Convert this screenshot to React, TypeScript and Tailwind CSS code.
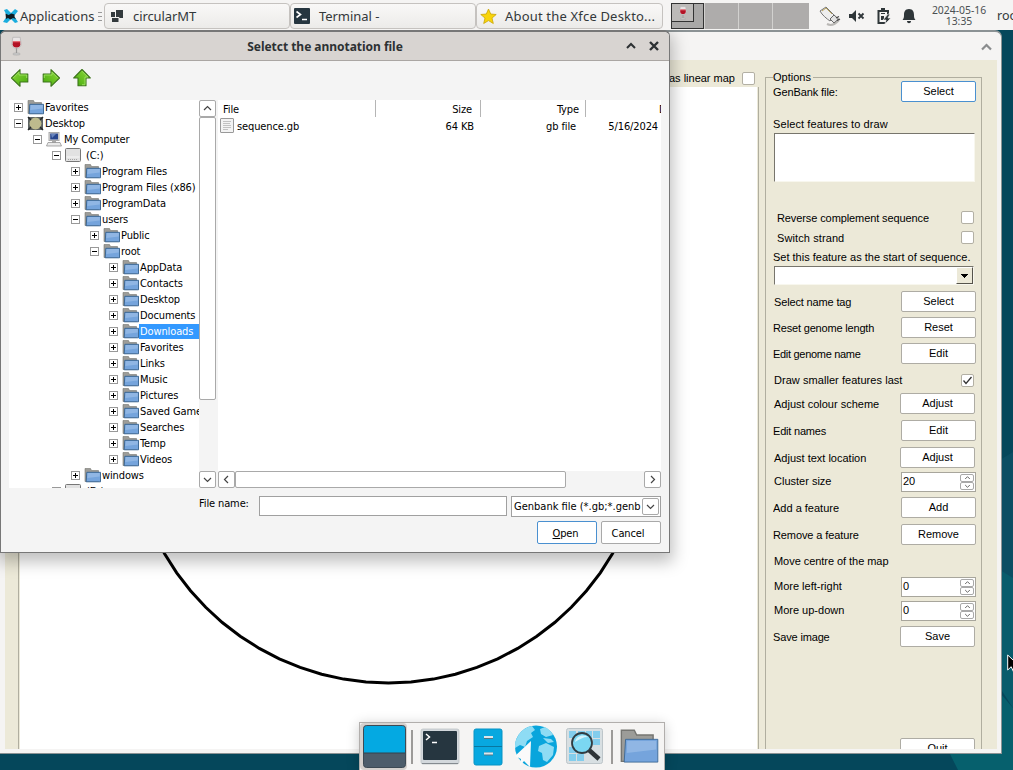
import React from "react";

const tahoma = "font-['DejaVu_Sans_Condensed','DejaVu_Sans',sans-serif] [font-stretch:condensed] text-[11px] tracking-[-0.12px]";

function Folder({ big = false }: { big?: boolean }) {
  return (
    <svg className={big ? "h-[36px] w-[40px] shrink-0" : "h-[15px] w-[17px] shrink-0"} viewBox="0 0 17 15" preserveAspectRatio="none">
      <path d="M1 .5h5.500l1 2h7v11H1z" fill="#9c9c98" stroke="#757571" strokeWidth=".6" />
      <path d="M2.800 4.300h13.700v9.500H2.200z" fill="#75a4dc" stroke="#34618f" strokeWidth={big ? ".35" : ".9"} />
      <path d="M3.500 5h12.300v3.500L3.300 10z" fill="#a2c3ea" opacity=".6" />
    </svg>
  );
}

function Drive() {
  return (
    <svg className="h-[15px] w-[16px] shrink-0" viewBox="0 0 16 15">
      <rect x=".5" y=".5" width="15" height="13" rx="1" fill="#e2e2e2" stroke="#777" />
      <path d="M1.5 9h13" stroke="#f8f8f8" />
      <path d="M3 11.5h10" stroke="#a5a5a5" strokeDasharray="1 1" />
    </svg>
  );
}

function DesktopIcon() {
  return (
    <svg className="h-[15px] w-[17px] shrink-0" viewBox="0 0 17 15">
      <rect x="1" y="1" width="15" height="13" rx="1" fill="#5d6362" />
      <circle cx="8.500" cy="7.500" r="6" fill="#bdbb8d" />
      <path d="M1 1l3 3M16 1l-3 3M1 14l3-3M16 14l-3-3" stroke="#25292b" strokeWidth="1.500" />
    </svg>
  );
}

function ComputerIcon() {
  return (
    <svg className="h-[15px] w-[16px] shrink-0" viewBox="0 0 16 15">
      <rect x="3" y=".5" width="10" height="8" fill="#ddd" stroke="#aaa" />
      <rect x="4.2" y="1.5" width="7.8" height="6" fill="#27458d" />
      <path d="M5 2h5L6 6z" fill="#6683bd" />
      <path d="M6 9h4v2H6z" fill="#aaa" />
      <path d="M2 10.5h12l1.5 3.5H.5z" fill="#e9e9e9" stroke="#888" strokeWidth=".7" />
    </svg>
  );
}

function Wine({ className = "h-[21px] w-[12px]" }: { className?: string }) {
  return (
    <svg className={className} viewBox="0 0 12 21">
      <path d="M2 1h8l1 7c0 3-2 5-5 5s-5-2-5-5z" fill="#e9e5e5" stroke="#b5b1b1" strokeWidth=".8" />
      <path d="M2 5.500h8l.2 3C10 11 8.500 12 6 12s-4-1-4.200-3.500z" fill="#b31225" />
      <path d="M2 5h8v1.500H2z" fill="#e56b74" />
      <path d="M6 13v6" stroke="#999" strokeWidth="1.300" />
      <ellipse cx="6" cy="19.200" rx="4" ry="1.200" fill="#ccc" stroke="#999" strokeWidth=".5" />
    </svg>
  );
}

function Arrow({ turn }: { turn: string }) {
  return (
    <svg className={"h-[20px] w-[20px] " + turn} viewBox="0 0 20 20">
      <defs>
        <linearGradient id="leaf" x1="0" y1="0" x2="1" y2="1">
          <stop offset="0" stopColor="#8fdb3c" />
          <stop offset="1" stopColor="#45a80c" />
        </linearGradient>
      </defs>
      <path d="M1.500 10L10 1.700V6h7.800v8H10v4.300z" fill="url(#leaf)" stroke="#3c741b" strokeWidth="1.100" strokeLinejoin="round" />
      <path d="M3.200 10L9 4.200V7h7.700v3" fill="none" stroke="#a4e66a" strokeWidth=".8" />
    </svg>
  );
}

function Chevron({ turn = "", className = "h-[9px] w-[9px]" }: { turn?: string; className?: string }) {
  return (
    <svg className={className + " " + turn} viewBox="0 0 9 9">
      <path d="M1 6l3.500-3.500L8 6" fill="none" stroke="#444" strokeWidth="1.200" />
    </svg>
  );
}

function ScrollBtn({ turn }: { turn: string }) {
  return (
    <div className="flex h-[17px] w-[17px] shrink-0 items-center justify-center rounded-[2px] border border-[#a9a9a9] bg-white">
      <Chevron turn={turn} />
    </div>
  );
}

type Node = { n: string; pad: string; open?: boolean; icon?: React.ReactNode; sel?: boolean; gap?: string };
const P0 = "pl-[5px]";
const P1 = "pl-[24px]";
const P2 = "pl-[43px]";
const P3 = "pl-[62px]";
const P4 = "pl-[81px]";
const P5 = "pl-[100px]";
const tree: Node[] = [
  { n: "Favorites", pad: P0 },
  { n: "Desktop", pad: P0, open: true, icon: <DesktopIcon /> },
  { n: "My Computer", pad: P1, open: true, icon: <ComputerIcon /> },
  { n: "(C:)", pad: P2, open: true, icon: <Drive />, gap: "ml-[3px]" },
  { n: "Program Files", pad: P3 },
  { n: "Program Files (x86)", pad: P3 },
  { n: "ProgramData", pad: P3 },
  { n: "users", pad: P3, open: true },
  { n: "Public", pad: P4 },
  { n: "root", pad: P4, open: true },
  ...["AppData", "Contacts", "Desktop", "Documents", "Downloads", "Favorites", "Links", "Music", "Pictures", "Saved Games", "Searches", "Temp", "Videos"].map(
    (n) => ({ n, pad: P5, sel: n === "Downloads" })
  ),
  { n: "windows", pad: P3 },
  { n: "(D:)", pad: P2, open: true, icon: <Drive />, gap: "ml-[3px]" },
];

function TreeRow({ node }: { node: Node }) {
  return (
    <div className={"flex h-[16px] shrink-0 items-start whitespace-nowrap " + node.pad}>
      <svg className="mr-[4px] mt-[3px] h-[9px] w-[9px] shrink-0" viewBox="0 0 9 9" shapeRendering="crispEdges">
        <rect x=".5" y=".5" width="8" height="8" fill="#fff" stroke="#999" />
        <path d={node.open ? "M2 4.500h5" : "M2 4.500h5M4.500 2v5"} stroke="#000" />
      </svg>
      <div className="flex w-[18px] shrink-0">{node.icon ?? <Folder />}</div>
      <span className={"h-[15px] leading-[16px] " + (node.gap ?? "") + (node.sel ? " -ml-px grow bg-[#3399ff] pl-px text-white" : "")}>
        {node.n}
      </span>
    </div>
  );
}

function Dialog() {
  return (
    <section className="absolute left-0 top-[30px] flex h-[523px] w-[670px] flex-col overflow-hidden rounded-t-[6px] border border-t-2 border-[#777] bg-[#f4f4f4] shadow-[0_6px_16px_3px_rgba(0,0,0,0.25)]">
      <header className="flex h-[29px] shrink-0 items-center border-b border-[#aaa6a3] bg-[#d8d4d1]">
        <div className="flex w-[30px] justify-center">
          <Wine className="h-[20px] w-[11px]" />
        </div>
        <h1 className="grow pr-[7px] pt-px text-center font-['Noto_Sans',sans-serif] text-[12px] font-bold tracking-[-0.03px] text-[#2d3133]">
          Seletct the annotation file
        </h1>
        <div className="flex w-[43px] items-center gap-[13px]">
          <svg className="h-[10px] w-[10px]" viewBox="0 0 10 10">
            <path d="M1 7l4-4 4 4" fill="none" stroke="#2d3133" strokeWidth="2" />
          </svg>
          <svg className="h-[10px] w-[10px]" viewBox="0 0 10 10">
            <path d="M1 1l8 8M9 1L1 9" stroke="#2d3133" strokeWidth="2.400" />
          </svg>
        </div>
      </header>
      <div className="flex h-[39px] shrink-0 items-center gap-[11px] pb-[6px] pl-[9px]">
        <Arrow turn="" />
        <Arrow turn="-scale-x-100" />
        <Arrow turn="rotate-90" />
      </div>
      <div className={"flex h-[388px] shrink-0 pl-[8px] text-black " + tahoma}>
        <div className="flex w-[190px] flex-col overflow-hidden bg-white">
          {tree.map((node, i) => (
            <TreeRow key={i} node={node} />
          ))}
        </div>
        <div className="flex w-[17px] flex-col">
          <ScrollBtn turn="" />
          <div className="h-[283px] rounded-[2px] border border-[#a9a9a9] bg-white" />
          <div className="grow" />
          <ScrollBtn turn="rotate-180" />
        </div>
        <div className="ml-[2px] flex w-[443px] flex-col">
          <div className="h-[371px] overflow-hidden bg-white">
            <div className="flex h-[17px] items-center">
              <div className="h-full w-[158px] border-r border-[#b5b5b5] pl-[5px] leading-[19px]">File</div>
              <div className="h-full w-[105px] border-r border-[#b5b5b5] pr-[8px] text-right leading-[19px]">Size</div>
              <div className="h-full w-[105px] border-r border-[#b5b5b5] pr-[6px] text-right leading-[19px]">Type</div>
              <div className="h-full grow overflow-hidden pl-[73px] leading-[19px]">
                <span className="inline-block w-[2px] overflow-hidden align-top">Date</span>
              </div>
            </div>
            <div className="flex h-[17px] items-center whitespace-nowrap leading-[19px]">
              <svg className="ml-[2px] mr-[3px] h-[15px] w-[14px]" viewBox="0 0 14 15">
                <rect x=".5" y=".5" width="13" height="14" rx=".5" fill="#f3f3f3" stroke="#999" />
                <path d="M3 3.500h8M3 5.500h7M3 7.500h8M3 9.500h8M3 11.500h5" stroke="#c2c2c2" />
              </svg>
              <div className="w-[140px] pt-px">sequence.gb</div>
              <div className="w-[97px] pt-px text-right">64 KB</div>
              <div className="w-[102px] pt-px text-right">gb file</div>
              <div className="w-[82px] pt-px text-right">5/16/2024</div>
            </div>
          </div>
          <div className="flex h-[17px]">
            <ScrollBtn turn="-rotate-90" />
            <div className="w-[331px] rounded-[2px] border border-[#a9a9a9] bg-white" />
            <div className="grow" />
            <ScrollBtn turn="rotate-90" />
          </div>
        </div>
      </div>
      <div className={"flex h-[30px] shrink-0 items-start pl-[198px] pt-[8px] text-black " + tahoma}>
        <span className="w-[60px] leading-[16px]">File name:</span>
        <div className="h-[20px] w-[248px] border border-[#a0a0a0] bg-white" />
        <div className="ml-[4px] flex h-[21px] w-[150px] items-center border border-[#a0a0a0] bg-white">
          <span className="w-[130px] overflow-hidden whitespace-nowrap pl-[2px] pt-[2px] tracking-[0px]">Genbank file (*.gb;*.genb</span>
          <div className="flex h-[17px] w-[17px] items-center justify-center rounded-[2px] border border-[#a9a9a9]">
            <Chevron turn="rotate-180" />
          </div>
        </div>
      </div>
      <div className={"flex gap-[4px] pl-[536px] pt-[3px] text-black " + tahoma}>
        <button className="h-[23px] w-[60px] rounded-[2px] border border-[#4a90d0] bg-white pr-[3px] pt-[3px]">
          <u>O</u>pen
        </button>
        <button className="h-[23px] w-[60px] rounded-[2px] border border-[#a9a9a9] bg-white pr-[6px] pt-[3px]">Cancel</button>
      </div>
    </section>
  );
}

function Btn({ children, active = false, shift = false }: { children: string; active?: boolean; shift?: boolean }) {
  return (
    <button
      className={
        "h-[21px] w-[75px] shrink-0 rounded-[2px] border bg-white leading-[19px] " +
        (active ? "border-[#4a90d0]" : "border-[#aeaca4]") +
        (shift ? " mr-px" : "")
      }
    >
      {children}
    </button>
  );
}

function Check({ on = false }: { on?: boolean }) {
  return (
    <span className="mr-[2px] flex h-[13px] w-[13px] shrink-0 items-center justify-center rounded-[2px] border border-[#b3b0a4] bg-white">
      {on && (
        <svg className="h-[9px] w-[9px]" viewBox="0 0 9 9">
          <path d="M.5 4.500L3 7.500 8.500 1" fill="none" stroke="#333" strokeWidth="1.300" />
        </svg>
      )}
    </span>
  );
}

function Spin({ value }: { value: string }) {
  return (
    <div className="flex h-[20px] w-[75px] shrink-0 border border-[#a8a69c] bg-white">
      <span className="grow pl-[1px] leading-[16px]">{value}</span>
      <div className="mr-px mt-px flex flex-col">
        <div className="flex h-[8px] w-[14px] items-center justify-center rounded-[2px] border border-[#a9a9a9]">
          <Chevron className="h-[6px] w-[7px]" />
        </div>
        <div className="flex h-[8px] w-[14px] items-center justify-center rounded-[2px] border border-[#a9a9a9]">
          <Chevron className="h-[6px] w-[7px]" turn="rotate-180" />
        </div>
      </div>
    </div>
  );
}

function Row({ label, h, pad = "", top = "pt-[4px]", children }: { label: string; h: string; pad?: string; top?: string; children?: React.ReactNode }) {
  return (
    <div className={"flex shrink-0 items-start justify-between whitespace-nowrap " + h}>
      <span className={"leading-[14px] " + top + " " + pad}>{label}</span>
      {children}
    </div>
  );
}

function Options() {
  return (
    <fieldset className="mt-[12px] flex h-[690px] w-[217px] flex-col border border-b-0 border-[#b0ae9f] px-[7px] font-['Liberation_Sans',sans-serif] text-[11px] text-black">
      <div className="-mt-[9px] h-[12px] shrink-0">
        <span className="bg-[#ece9d8] pr-[2px] leading-[10px]">Options</span>
      </div>
      <div className="-mr-[2px] flex grow flex-col overflow-hidden">
        <Row label="GenBank file:" h="h-[36px]" pad="tracking-[-0.1px]">
          <Btn active>Select</Btn>
        </Row>
        <span className="h-[16px] shrink-0 leading-[14px] tracking-[0.1px]">Select features to draw</span>
        <div className="ml-px h-[49px] w-[201px] shrink-0 border border-b-[#f8f7ee] border-l-[#77756c] border-r-[#f8f7ee] border-t-[#77756c] bg-white" />
        <Row label="Reverse complement sequence" h="mt-[25px] h-[20px] [&>span:last-child]:mt-[4px]" pad="pl-[4px] tracking-[-0.1px]">
          <Check />
        </Row>
        <Row label="Switch strand" h="h-[20px] [&>span:last-child]:mt-[4px]" pad="pl-[4px] tracking-[0.1px]">
          <Check />
        </Row>
        <span className="h-[19px] shrink-0 whitespace-nowrap pt-[3px] leading-[14px]">Set this feature as the start of sequence.</span>
        <div className="ml-px flex h-[19px] w-[200px] shrink-0 justify-end border border-b-[#f8f7ee] border-l-[#77756c] border-r-[#f8f7ee] border-t-[#77756c] bg-white">
          <div className="flex w-[17px] items-center justify-center border border-b-[#55534b] border-l-white border-r-[#55534b] border-t-white bg-[#ece9d8]">
            <svg className="h-[4px] w-[7px]" viewBox="0 0 7 4" shapeRendering="crispEdges">
              <path d="M0 0h7L3.500 4z" />
            </svg>
          </div>
        </div>
        <Row label="Select name tag" h="mt-[6px] h-[26px]" pad="pl-[1px] tracking-[-0.15px]"><Btn>Select</Btn></Row>
        <Row label="Reset genome length" h="h-[26px]" pad="tracking-[-0.18px]"><Btn>Reset</Btn></Row>
        <Row label="Edit genome name" h="h-[27px]" pad="tracking-[-0.3px]"><Btn>Edit</Btn></Row>
        <Row label="Draw smaller features last" h="h-[23px] [&>span:last-child]:mt-[4px]" pad="pl-[1px] tracking-[0.05px]" top="pt-[3px]"><Check on /></Row>
        <Row label="Adjust colour scheme" h="h-[27px]" pad="pl-[1px]"><Btn shift>Adjust</Btn></Row>
        <Row label="Edit names" h="h-[27px]" pad="tracking-[-0.2px]"><Btn>Edit</Btn></Row>
        <Row label="Adjust text location" h="h-[25px]" pad="pl-[1px]"><Btn shift>Adjust</Btn></Row>
        <Row label="Cluster size" h="h-[25px]" pad="pl-[1px]" top="pt-[2px]"><Spin value="20" /></Row>
        <Row label="Add a feature" h="h-[27px]"><Btn>Add</Btn></Row>
        <Row label="Remove a feature" h="h-[27px]" pad="tracking-[-0.1px]"><Btn>Remove</Btn></Row>
        <Row label="Move centre of the map" h="h-[26px]" pad="pl-[1px] tracking-[-0.05px]" top="pt-[3px]" />
        <Row label="More left-right" h="h-[24px]" pad="pl-[1px]" top="pt-[2px]"><Spin value="0" /></Row>
        <Row label="More up-down" h="h-[25px]" pad="pl-[1px]" top="pt-[2px]"><Spin value="0" /></Row>
        <Row label="Save image" h="h-[112px]" pad="tracking-[-0.15px]"><Btn shift>Save</Btn></Row>
        <div className="flex shrink-0 justify-end"><Btn shift>Quit</Btn></div>
      </div>
    </fieldset>
  );
}

const ring = Array.from({ length: 72 }, (_, i) => {
  const a = (i * 2 * Math.PI) / 72 + Math.PI / 2;
  return `${(368.5 + 258.5 * Math.cos(a)).toFixed(1)},${(337.5 + 258.5 * Math.sin(a)).toFixed(1)}`;
}).join(" ");

function MainWindow() {
  return (
    <section className="absolute left-0 top-[30px] flex h-[724px] w-[1002px] flex-col overflow-hidden rounded-t-[7px] border-b border-r border-t-2 border-[#8b9294] bg-[#f5f4f3]">
      <header className="flex h-[28px] shrink-0 items-center justify-end pr-[9px]">
        <svg className="mt-[2px] h-[10px] w-[11px]" viewBox="0 0 11 10">
          <path d="M1 7.500L5.500 3 10 7.500" fill="none" stroke="#8a8c8d" strokeWidth="2.200" />
        </svg>
      </header>
      <div className="ml-[5px] mr-[4px] flex h-[689px] shrink-0 overflow-hidden bg-[#ece9d8]">
        <div className="ml-[13px] flex w-[741px] flex-col">
          <div className="flex h-[27px] items-center justify-end pr-[4px] pt-[9px] font-['Liberation_Sans',sans-serif] text-[11px] text-black">
            <span className="mr-[7px]">as linear map</span>
            <span className="h-[13px] w-[13px] rounded-[2px] border border-[#b3b0a4] bg-white" />
          </div>
          <div className="grow border-x border-[#b0ae9f] px-px">
            <svg className="h-full w-[737px] bg-white" viewBox="0 0 737 662">
              <polygon points={ring} fill="none" stroke="#000" strokeWidth="3" />
            </svg>
          </div>
        </div>
        <div className="ml-[6px] mt-[5px]">
          <Options />
        </div>
      </div>
    </section>
  );
}

function Task({ icon, children, w, track = "" }: { icon: React.ReactNode; children: string; w: string; track?: string }) {
  return (
    <div className={"flex h-[26px] shrink-0 items-center rounded-[4px] border border-[#c5c2bf] bg-gradient-to-b from-[#f9f8f7] to-[#ecebe9] pl-[3px] " + w}>
      <div className="flex w-[25px] shrink-0">{icon}</div>
      <span className={"whitespace-nowrap pt-px " + track}>{children}</span>
    </div>
  );
}

function TopPanel() {
  return (
    <nav className="absolute left-0 top-0 flex h-[30px] w-[1013px] items-center overflow-hidden bg-[#f5f4f3] pt-[2px] font-['Noto_Sans',sans-serif] text-[13px] text-[#33383a]">
      <svg className="ml-[3px] h-[16px] w-[15px] shrink-0" viewBox="0 0 15 16">
        <path d="M1 2l3-1 4 4 4-4 3 2-4 5 4 6-3 1-4-4-4 4-4-1 4-6z" fill="#1badde" />
        <path d="M2.500 5.500l3 1.500 3-1.500 3 1v2.500l1.500 2-3-1-2.500 1.500L5 10l-2 1z" fill="#101c22" />
      </svg>
      <span className="ml-[2px] w-[78px] shrink-0 pt-px tracking-[-0.03px]">Applications</span>
      <svg className="mr-[2px] h-[11px] w-[4px] shrink-0" viewBox="0 0 4 11"><path d="M0 1.500h4M0 5.500h4M0 9.500h4" stroke="#999" /></svg>
      <Task w="w-[186px]" track="tracking-[-0.1px]" icon={
        <svg className="ml-[2px] h-[14px] w-[14px]" viewBox="0 0 14 14"><path d="M6 1h7v8H6zM1 3h4v5H1zM2 9h7v4H2z" fill="#333a3d" /><path d="M5.500 3v5.500H9V13" stroke="#f5f4f3" fill="none" /></svg>
      }>circularMT</Task>
      <Task w="w-[186px]" track="tracking-[-0.05px]" icon={
        <svg className="h-[16px] w-[16px]" viewBox="0 0 16 16"><rect width="16" height="16" rx="1" fill="#263640" /><path d="M2.500 3.500l4 3-4 3M8 11.500h5" fill="none" stroke="#fff" strokeWidth="1.600" /></svg>
      }>Terminal - </Task>
      <Task w="w-[187px]" track="tracking-[0.18px]" icon={
        <svg className="h-[17px] w-[17px]" viewBox="0 0 17 17"><path d="M8.500 1l2.200 5 5.500.5-4.200 3.600 1.300 5.400-4.800-2.900-4.800 2.900L5 10.100.8 6.500 6.300 6z" fill="#f8d40a" stroke="#c9a404" strokeWidth=".8" /></svg>
      }>About the Xfce Deskto...</Task>
      <div className="ml-[8px] flex h-[26px] w-[138px] shrink-0 gap-px bg-[#d2d1cf]">
        <div className="w-[33px] border border-[#333] bg-[#a9a8a7]">
          <div className="flex h-[18px] w-[22px] items-center justify-center border-b border-r border-[#333] bg-[#bcbab8]"><Wine className="h-[14px] w-[8px]" /></div>
        </div>
        <div className="w-[33px] bg-[#aeacab]" />
        <div className="w-[33px] bg-[#aeacab]" />
        <div className="w-[36px] bg-[#aeacab]" />
      </div>
      <svg className="ml-[10px] h-[20px] w-[22px] shrink-0" viewBox="0 0 22 20">
        <path d="M1 5l6-4 9 9-5 5C8 13 3 9 1 5z" fill="#eee" stroke="#777" />
        <path d="M3 5l4-3 6 6" fill="none" stroke="#b9a35c" />
        <path d="M8 18q6 3 12-4" fill="none" stroke="#b9b7b4" strokeWidth="2" />
        <path d="M11 13l4-4 4.500 4-4.500 4z" fill="#e2e2e2" stroke="#666" />
        <path d="M17 12l3-1.500M18 14.500l3-1.500" stroke="#444" strokeWidth="1.200" />
      </svg>
      <svg className="ml-[7px] h-[14px] w-[17px] shrink-0" viewBox="0 0 17 14">
        <path d="M1 5h3l4-4v12L4 9H1z" fill="#2f3639" /><path d="M10.500 4.500l5 5M15.500 4.500l-5 5" stroke="#2f3639" strokeWidth="1.800" />
      </svg>
      <svg className="ml-[11px] h-[17px] w-[16px] shrink-0" viewBox="0 0 16 17">
        <path d="M10 15H2.500V3H12v4" fill="none" stroke="#2f3639" strokeWidth="2" /><path d="M5 0h4v3H5zM5 5h4v1H5zM5 8h3v4H5z" fill="#2f3639" /><path d="M12 6l-5 6h3l-1 4 6-6h-3l2-4z" fill="#2f3639" stroke="#f5f4f3" strokeWidth=".7" />
      </svg>
      <svg className="ml-[10px] h-[16px] w-[14px] shrink-0" viewBox="0 0 14 16">
        <path d="M7 1c4 0 5 3 5 6 0 2 0 3 1.500 5H.5C2 10 2 9 2 7c0-3 1-6 5-6zM5 13h4c0 3-4 3-4 0z" fill="#2f3639" />
      </svg>
      <div className="ml-[14px] w-[58px] shrink-0 text-center text-[10.400px] leading-[11px] text-[#4b5052]">
        <div className="whitespace-nowrap">2024-05-16</div>
        <div>13:35</div>
      </div>
      <span className="ml-[9px] pt-px text-[12.500px]">root</span>
    </nav>
  );
}

function Dock() {
  return (
    <nav className="absolute left-[359px] top-[722px] flex h-[48px] w-[306px] items-center border border-b-0 border-[#b1aeac] bg-[#f5f4f3] shadow-[0_2px_12px_rgba(0,0,0,0.2)]">
      <div className="flex h-[47px] w-[47px] shrink-0 items-center justify-center rounded-[4px] bg-[#d5d1ce] pl-px">
        <svg className="h-[43px] w-[43px]" viewBox="0 0 43 43"><rect x=".5" y=".5" width="42" height="42" rx="3" fill="#4d5d6b" stroke="#3d4a54" /><path d="M1 4q0-3 3-3h35q3 0 3 3v24H1z" fill="#04a9e2" /><path d="M1 28h41" stroke="#35424c" /></svg>
      </div>
      <div className="ml-[4px] h-[34px] w-[2px] shrink-0 bg-[#9c9a98]" />
      <svg className="ml-[7px] h-[37px] w-[40px] shrink-0" viewBox="0 0 40 37">
        <rect x="1" y="1" width="38" height="35" rx="2" fill="#d3d8dc" stroke="#b9bec2" strokeWidth=".7" /><path d="M2 35.500h36" stroke="#858b90" /><rect x="3" y="3" width="34" height="29" rx="1" fill="#263640" /><path d="M6 6l3.500 3L6 12M12 14.500h5" stroke="#fff" strokeWidth="1.500" fill="none" />
      </svg>
      <svg className="ml-[13px] h-[38px] w-[30px] shrink-0" viewBox="0 0 30 38">
        <rect x="1" y="1" width="28" height="36" rx="2" fill="#08a8e0" stroke="#0793c4" /><path d="M1 18.500h28" stroke="#0877a0" /><path d="M11 9.500h9M11 26h9" stroke="#527483" strokeWidth="3" /><path d="M11 9h9M11 25.500h9" stroke="#dce6eb" strokeWidth="2" />
      </svg>
      <svg className="ml-[12px] h-[43px] w-[42px] shrink-0" viewBox="0 0 42 43">
        <circle cx="21" cy="21.500" r="21" fill="#09a5dc" />
        <path d="M2 13C5 6 11 2 17 1l3 4-4 3 2 4-6 4-2 6-5-2-5 3c0-4 0-7 2-10zM25 4l5-2c4 2 7 6 8 8l-7 2-5-3zM24 21l7-3 8 4-1 8-6 7-4-2-1-7-4-2zM28 13l8 1 3 3-6 1z" fill="#8edcf4" />
        <path d="M16 16L0 31l6 3-1 7 4-5 6 6z" fill="#fafafa" />
      </svg>
      <svg className="ml-[9px] h-[37px] w-[37px] shrink-0" viewBox="0 0 37 37">
        <rect x=".5" y=".5" width="36" height="35" rx="2" fill="#d8dfe2" stroke="#bdc5c9" />
        <path d="M3 3h7v7H3zM12 3h7v7h-7zM20 3h6v7h-6zM27 3h7v7h-7zM27 11h7v6h-7zM3 19h7v6H3zM3 26h7v7H3zM11 26h7v7h-7z" fill="#83cdec" />
        <path d="M23 22l10 9" stroke="#2e3437" strokeWidth="4.500" />
        <circle cx="16" cy="15" r="10" fill="#7bd7f2" stroke="#303c42" strokeWidth="1.800" /><path d="M9 14c1-6 8-8 13-5-5 0-8 2-13 5z" fill="#d2f3fc" />
      </svg>
      <div className="ml-[8px] h-[34px] w-[2px] shrink-0 bg-[#9c9a98]" />
      <div className="ml-[6px]"><Folder big /></div>
    </nav>
  );
}

export default function App() {
  return (
    <main className="relative h-[770px] w-[1013px] overflow-hidden bg-[#05475b]">
      <svg className="absolute left-0 top-0 h-[770px] w-[1013px]" viewBox="0 0 1013 770">
        <path d="M1000 460l13-8v128h-13z" fill="#0b4e63" />
        <path d="M1000 570l13 8v130l-13-20z" fill="#085c6c" />
        <path d="M950 754h51v-60l12 14v62h-55z" fill="#06606d" />
      </svg>
      <MainWindow />
      <Dialog />
      <TopPanel />
      <Dock />
      <svg className="absolute left-[1007px] top-[654px] h-[20px] w-[13px]" viewBox="0 0 13 20">
        <path d="M.7 1v15l3.500-3.300 2.500 5.500 2.500-1-2.500-5.500H12z" fill="#000" stroke="#fff" />
      </svg>
    </main>
  );
}
